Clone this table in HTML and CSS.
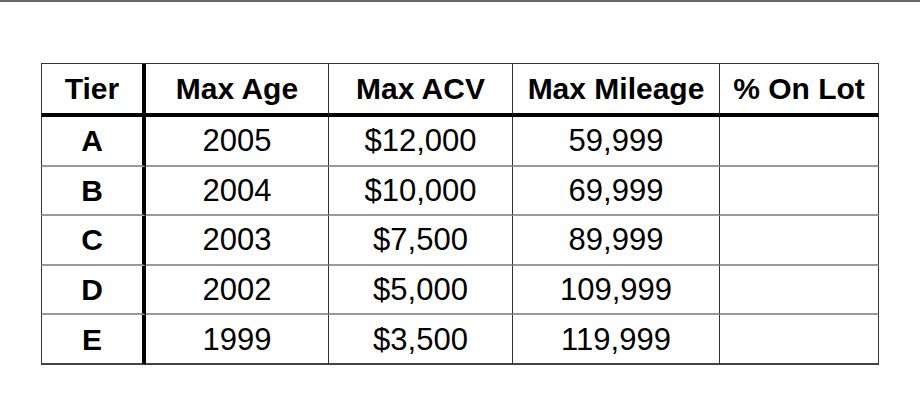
FILE: index.html
```html
<!DOCTYPE html>
<html>
<head>
<meta charset="utf-8">
<link rel="stylesheet" href="styles.css">
</head>
<body>
<div class="topline"></div>
<table class="tiers">
  <colgroup>
    <col class="c1"><col class="c2"><col class="c3"><col class="c4"><col class="c5">
  </colgroup>
  <thead>
    <tr><th class="first">Tier</th><th>Max Age</th><th>Max ACV</th><th>Max Mileage</th><th>% On Lot</th></tr>
  </thead>
  <tbody>
    <tr><td class="first tier">A</td><td>2005</td><td>$12,000</td><td>59,999</td><td></td></tr>
    <tr><td class="first tier">B</td><td>2004</td><td>$10,000</td><td>69,999</td><td></td></tr>
    <tr><td class="first tier">C</td><td>2003</td><td>$7,500</td><td>89,999</td><td></td></tr>
    <tr><td class="first tier">D</td><td>2002</td><td>$5,000</td><td>109,999</td><td></td></tr>
    <tr><td class="first tier">E</td><td>1999</td><td>$3,500</td><td>119,999</td><td></td></tr>
  </tbody>
</table>
</body>
</html>
```
FILE: styles.css
```css
html, body {
  margin: 0;
  padding: 0;
  background: #ffffff;
}
body {
  width: 920px;
  height: 414px;
  overflow: hidden;
  font-family: "Liberation Sans", Arial, sans-serif;
  color: #000;
}
.topline {
  height: 2px;
  background: #666666;
}
.tiers {
  margin: 61px 0 0 41px;
  width: 838px;
  table-layout: fixed;
  border-collapse: separate;
  border-spacing: 0;
  border-top: 1px solid #333;
}
.c1 { width: 105px; }
.c2 { width: 183px; }
.c3 { width: 184px; }
.c4 { width: 207px; }
.c5 { width: 159px; }
.tiers th, .tiers td {
  box-sizing: border-box;
  padding: 0;
  text-align: center;
  vertical-align: middle;
  line-height: 34px;
  border-right: 1px solid #333;
}
.tiers th {
  font-size: 30px;
  font-weight: bold;
  height: 53px;
  border-bottom: 4px solid #000;
}
.tiers td {
  font-size: 31px;
  font-weight: normal;
  height: 49.6px;
  border-bottom: 2px solid #999;
  padding-top: 1px;
}
.tiers tbody tr:last-child td {
  border-bottom: 2px solid #444;
}
.tiers .first {
  border-left: 1px solid #333;
  border-right: 4px solid #000;
}
.tiers .tier {
  font-size: 30px;
  font-weight: bold;
}
```
